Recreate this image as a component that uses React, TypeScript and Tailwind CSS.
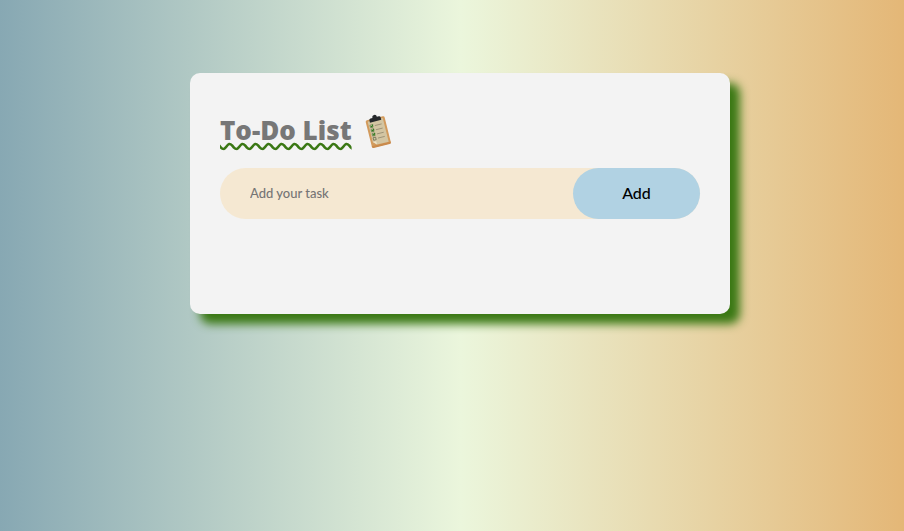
import { useState, type FormEvent } from "react";

function ClipboardIcon() {
  return (
    <svg className="h-9 w-9" viewBox="0 0 36 36" aria-hidden="true">
      <g transform="rotate(-14 18 19)">
        <rect x="8.5" y="5" width="19.5" height="28" rx="1.5" fill="#d29a5c" />
        <path d="M8.5 32a1.5 1.5 0 0 0 1.5 1.5h16.5a1.5 1.5 0 0 0 1.5-1.5v-.6H8.5z" fill="#c98a4c" />
        <path d="M10.5 6.5H26V31H14l-3.5-3.5z" fill="#d3c5a2" />
        <path d="M10.5 27.5H14V31z" fill="#efe4c8" />
        <path d="M12.5 8V5.5Q12.5 4 14 4h2q0-2.500 2.300-2.500t2.300 2.500h2q1.500 0 1.500 1.500V8z" fill="#25282b" />
        <g fill="#cbd2a2" stroke="#6c7f55" strokeWidth="0.7">
          <rect x="11.8" y="10.5" width="2.6" height="2.6" />
          <rect x="11.8" y="14.8" width="2.6" height="2.6" />
          <rect x="11.8" y="19.1" width="2.6" height="2.6" />
          <rect x="11.8" y="23.4" width="2.6" height="2.6" stroke="#68604c" />
        </g>
        <path d="m12.3 11.5 1 1 1.5-2M12.3 15.8l1 1 1.5-2M12.3 20.1l1 1 1.5-2" fill="none" stroke="#2f7a1c" strokeWidth="1" />
        <path d="M16.5 12h7M16.5 16.3h7M16.5 20.6h7M16.5 24.9h7" stroke="#958b70" strokeWidth="0.8" />
      </g>
    </svg>
  );
}

export default function App() {
  const [task, setTask] = useState("");
  const [tasks, setTasks] = useState<string[]>([]);

  function addTask(event: FormEvent) {
    event.preventDefault();
    if (!task.trim()) return;
    setTasks([...tasks, task.trim()]);
    setTask("");
  }

  return (
    <div className="min-h-screen bg-[linear-gradient(to_right,#87a8b3,#ebf6dc_51%,#e4b777)] pt-[73px] pb-5 pl-4 font-['Gill_Sans','Gill_Sans_MT',Lato,sans-serif]">
      <main className="mx-auto w-full max-w-[540px] rounded-[10px] bg-[#f3f3f3] px-[30px] pt-10 pb-[95px] shadow-[10px_10px_10px_#3a7814]">
        <header className="mb-[19px] flex h-9 items-center gap-2">
          <h1 className="pb-0.5 font-['Gill_Sans','Gill_Sans_MT','Open_Sans',sans-serif] text-[26px] leading-8 font-extrabold text-[#777777] underline decoration-[#3a7814] decoration-wavy">
            To-Do List
          </h1>
          <ClipboardIcon />
        </header>
        <form onSubmit={addTask} className="flex rounded-full bg-[#f5e8d2]">
          <input
            type="text"
            aria-label="Add your task"
            placeholder="Add your task"
            value={task}
            onChange={(e) => setTask(e.target.value)}
            className="min-w-0 flex-1 bg-transparent pl-[30px] text-[13px] font-medium text-black outline-none placeholder:text-[#757575]"
          />
          <button type="submit" className="h-[51px] w-[127px] rounded-full bg-[#b1d2e3] pb-0.5 text-base font-medium text-black">
            Add
          </button>
        </form>
        {tasks.length > 0 && (
          <ul className="mt-5 space-y-2">
            {tasks.map((item, i) => (
              <li key={i}>{item}</li>
            ))}
          </ul>
        )}
      </main>
    </div>
  );
}
